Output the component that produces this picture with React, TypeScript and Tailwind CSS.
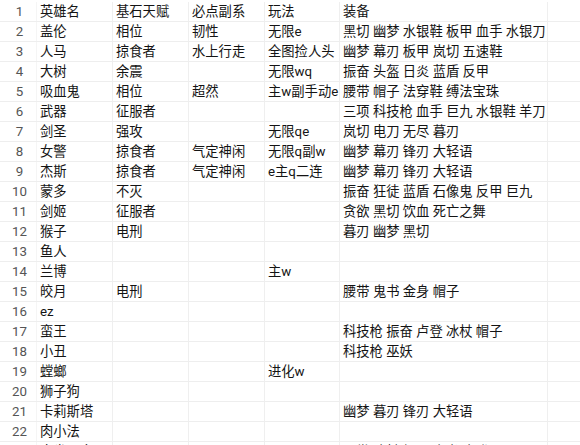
import React from "react";

const rows: string[][] = [
  ["英雄名", "基石天赋", "必点副系", "玩法", "装备"],
  ["盖伦", "相位", "韧性", "无限e", "黑切 幽梦 水银鞋 板甲 血手 水银刀"],
  ["人马", "掠食者", "水上行走", "全图捡人头", "幽梦 幕刃 板甲 岚切 五速鞋"],
  ["大树", "余震", "", "无限wq", "振奋 头盔 日炎 蓝盾 反甲"],
  ["吸血鬼", "相位", "超然", "主w副手动e", "腰带 帽子 法穿鞋 缚法宝珠"],
  ["武器", "征服者", "", "", "三项 科技枪 血手 巨九 水银鞋 羊刀"],
  ["剑圣", "强攻", "", "无限qe", "岚切 电刀 无尽 暮刃"],
  ["女警", "掠食者", "气定神闲", "无限q副w", "幽梦 幕刃 锋刃 大轻语"],
  ["杰斯", "掠食者", "气定神闲", "e主q二连", "幽梦 幕刃 锋刃 大轻语"],
  ["蒙多", "不灭", "", "", "振奋 狂徒 蓝盾 石像鬼 反甲 巨九"],
  ["剑姬", "征服者", "", "", "贪欲 黑切 饮血 死亡之舞"],
  ["猴子", "电刑", "", "", "暮刃 幽梦 黑切"],
  ["鱼人", "", "", "", ""],
  ["兰博", "", "", "主w", ""],
  ["皎月", "电刑", "", "", "腰带 鬼书 金身 帽子"],
  ["ez", "", "", "", ""],
  ["蛮王", "", "", "", "科技枪 振奋 卢登 冰杖 帽子"],
  ["小丑", "", "", "", "科技枪 巫妖"],
  ["螳螂", "", "", "进化w", ""],
  ["狮子狗", "", "", "", ""],
  ["卡莉斯塔", "", "", "", "幽梦 暮刃 锋刃 大轻语"],
  ["肉小法", "", "", "", ""],
  ["大发明家", "", "", "", "灭世 冰杖 帽子 鬼书 卢登"],
];

export default function App() {
  return (
    <div
      className="w-[580px] h-[445px] overflow-hidden bg-white pt-[2px]"
      style={{ fontFamily: "Roboto, 'Noto Sans CJK SC', sans-serif" }}
    >
      {rows.map((r, i) => (
        <div
          key={i}
          className="grid grid-cols-[37px_76px_76px_76px_75px_208px_1fr] h-[20px] border-b border-[#eeeeee] text-[13.3px] leading-[19px] text-[#141414]"
        >
          <div className="text-center pl-[3px] text-[#555555] border-r border-[#f5f5f5]">{i + 1}</div>
          {r.map((c, j) => (
            <div key={j} className="pl-[3px] whitespace-nowrap border-r border-[#efefef]">
              {c}
            </div>
          ))}
          <div />
        </div>
      ))}
    </div>
  );
}
